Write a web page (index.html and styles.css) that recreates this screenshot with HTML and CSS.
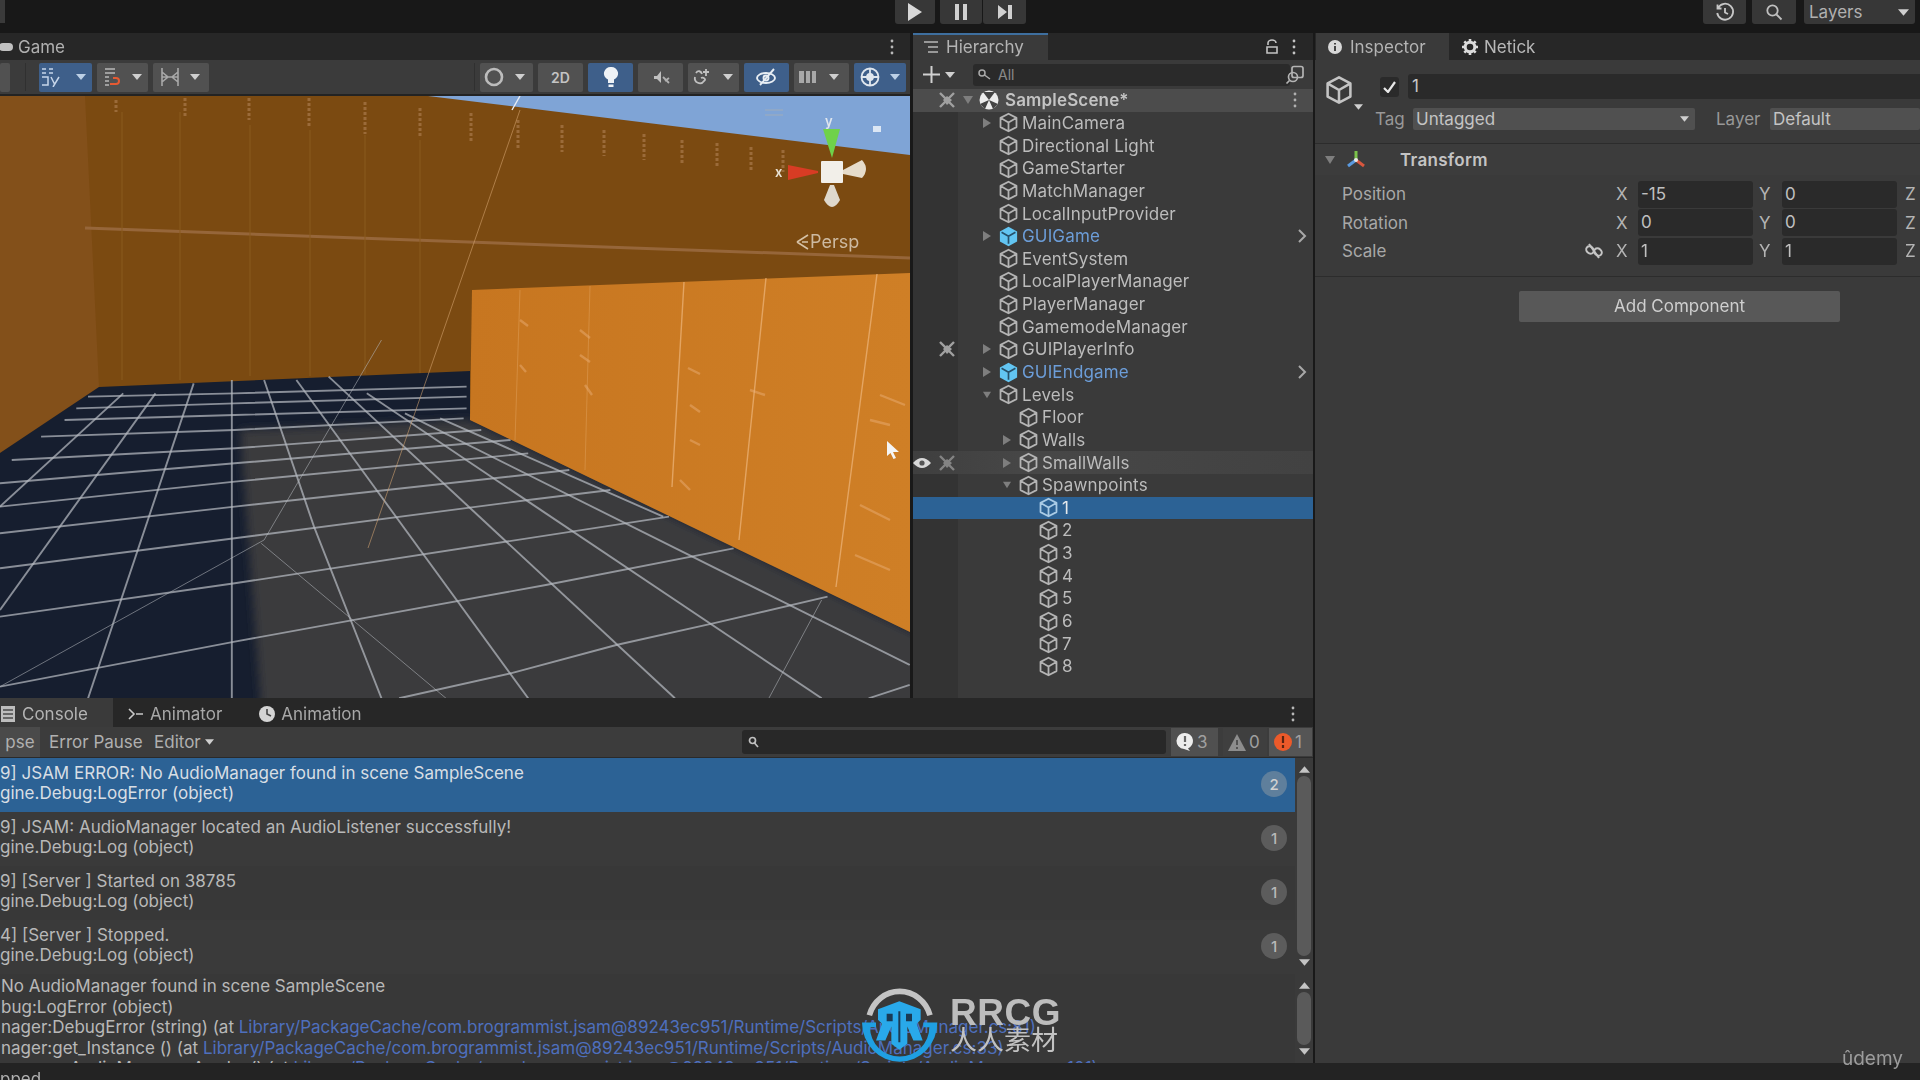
FILE: index.html
```html
<!DOCTYPE html>
<html lang="en">
<head>
<meta charset="utf-8">
<title>Unity Editor</title>
<link rel="stylesheet" href="styles.css">
</head>
<body>
<svg class="defs" width="0" height="0" aria-hidden="true">
  <symbol id="cube" viewBox="0 0 20 20"><path d="M10 1.6 17.6 5.6V14.4L10 18.4 2.4 14.4V5.6ZM2.6 5.8 10 10 17.4 5.8M10 10V18" fill="none" stroke="currentColor" stroke-width="1.7" stroke-linejoin="round"/></symbol>
  <symbol id="prefab" viewBox="0 0 20 20"><path d="M10 .8 18.2 5.2V14.8L10 19.2 1.8 14.8V5.2Z" fill="#62c5f2"/><path d="M3.4 6 10 9.8 16.6 6M10 9.8V17" fill="none" stroke="#26506a" stroke-width="1.6"/></symbol>
  <symbol id="hidden" viewBox="0 0 20 20"><path d="M3 3 17 17M17 3 3 17" stroke="#a0a0a0" stroke-width="2.4"/><path d="M6 10 10 6 15 10 10 15Z" fill="#a0a0a0"/></symbol>
  <symbol id="caret" viewBox="0 0 10 6"><path d="M0 0H10L5 6Z" fill="currentColor"/></symbol>
  <symbol id="right" viewBox="0 0 8 10"><path d="M0 0 8 5 0 10Z" fill="currentColor"/></symbol>
  <symbol id="down" viewBox="0 0 10 8"><path d="M0 0H10L5 8Z" fill="currentColor"/></symbol>
  <symbol id="dots" viewBox="0 0 4 16"><circle cx="2" cy="2" r="1.4" fill="currentColor"/><circle cx="2" cy="8" r="1.4" fill="currentColor"/><circle cx="2" cy="14" r="1.4" fill="currentColor"/></symbol>
</svg>

<div class="app">
  <header class="topbar">
    <div class="stub"></div>
    <div class="play-group">
      <div class="top-btn w40"><svg width="16" height="18" viewBox="0 0 16 18"><path d="M1 0 15 9 1 18Z" fill="#d8d8d8"/></svg></div>
      <div class="top-btn w42"><svg width="14" height="16" viewBox="0 0 14 16"><path d="M1 0H5V16H1ZM9 0H13V16H9Z" fill="#d0d0d0"/></svg></div>
      <div class="top-btn w43"><svg width="16" height="16" viewBox="0 0 16 16"><path d="M1 1 10 8 1 15ZM11 1H15V15H11Z" fill="#d0d0d0"/></svg></div>
    </div>
    <div class="top-right">
      <div class="top-btn w43"><svg width="20" height="20" viewBox="0 0 20 20" fill="none" stroke="#c8c8c8" stroke-width="1.8"><path d="M3 6A8 8 0 1 1 2.2 11M2.5 2.5V6.5H6.5M10 6V10.5L13 12"/></svg></div>
      <div class="top-btn w44"><svg width="18" height="18" viewBox="0 0 18 18" fill="none" stroke="#c0c0c0" stroke-width="1.8"><circle cx="7.5" cy="7.5" r="5.2"/><path d="M11.5 11.5 16.5 16.5"/></svg></div>
      <div class="top-btn layers"><span>Layers</span><svg class="ic-caret" width="11" height="7"><use href="#caret"/></svg></div>
    </div>
  </header>

  <div class="workspace">
    <div class="left-col">
      <div class="upper-row">
        <section class="game">
          <div class="strip">
            <div class="game-tab"><svg width="14" height="10" viewBox="0 0 14 10"><rect x="0" y="1" width="14" height="8" rx="4" fill="#c0c0c0"/></svg><span>Game</span></div>
            <svg class="menu-dots" width="4" height="16"><use href="#dots"/></svg>
          </div>
          <div class="toolbar">
            <div class="tools">
              <div class="tool stub-tool"></div>
              <div class="sep sep-a"></div>
              <div class="tool on w53 split tight"><svg width="22" height="20" viewBox="0 0 22 20" fill="none" stroke="#c6d6ea" stroke-width="1.5"><path d="M2 2H6M9 2H13M2 6H6M9 6H13M2 10H8V18H2M11 10 15 18M19 10 13 20"/></svg><svg class="ic-caret" width="10" height="6"><use href="#caret"/></svg></div>
              <div class="tool w51 split"><svg width="20" height="20" viewBox="0 0 20 20" fill="none" stroke="#b8b8b8" stroke-width="1.4"><path d="M4 2H14M4 6H14M4 10H8M4 14H8M4 18H8"/><path d="M9 17H15A3 3 0 0 0 15 11H12" stroke="#e65a32" stroke-width="2"/></svg><svg class="ic-caret" width="10" height="6"><use href="#caret"/></svg></div>
              <div class="tool w56 split wide"><svg width="22" height="20" viewBox="0 0 22 20" fill="none" stroke="#a8a8a8" stroke-width="1.6"><path d="M3 1V19M19 1V19M3 5 9 10 3 15M19 5 13 10 19 15M3 10H19"/></svg><svg class="ic-caret" width="10" height="6"><use href="#caret"/></svg></div>
            </div>
            <div class="tools right-tools">
              <div class="sep"></div>
              <div class="tool w53 split"><svg width="20" height="20" viewBox="0 0 20 20" fill="none" stroke="#bcbcbc" stroke-width="2.6"><circle cx="10" cy="10" r="8"/></svg><svg class="ic-caret" width="10" height="6"><use href="#caret"/></svg></div>
              <div class="tool w45 two-d">2D</div>
              <div class="tool on w45"><svg width="16" height="22" viewBox="0 0 16 22"><path d="M8 1A6.5 6.5 0 0 1 11 13.5V17H5V13.5A6.5 6.5 0 0 1 8 1ZM5.5 18.5H10.5V21H5.5Z" fill="#eef2f6"/></svg></div>
              <div class="tool w45"><svg width="20" height="20" viewBox="0 0 20 20"><path d="M3 9H6L10 4V16L6 12H3Z" fill="#c0c0c0"/><path d="M12 10 18 16M14 14 18 11" stroke="#b0b0b0" stroke-width="1.8"/></svg></div>
              <div class="tool w51 split"><svg width="20" height="20" viewBox="0 0 20 20" fill="none" stroke="#c0c0c0" stroke-width="1.8"><path d="M3 10A5 5 0 0 0 12 14C15 12 11 10 9 11M4 6C6 3 9 4 10 7M14 2V9M11 5H17"/></svg><svg class="ic-caret" width="10" height="6"><use href="#caret"/></svg></div>
              <div class="tool on w45"><svg width="24" height="20" viewBox="0 0 24 20" fill="none" stroke="#e8eef4" stroke-width="1.9"><ellipse cx="11" cy="11" rx="9" ry="5"/><circle cx="11" cy="11" r="2.5"/><path d="M5 18 19 2"/></svg></div>
              <div class="tool w55 split"><svg width="20" height="16" viewBox="0 0 20 16"><path d="M1 2H6V14H1ZM8 2H12V14H8ZM14 2H18V14H14Z" fill="#a8a8a8"/></svg><svg class="ic-caret" width="10" height="6"><use href="#caret"/></svg></div>
              <div class="tool on w52 split gz"><svg width="22" height="22" viewBox="0 0 22 22" fill="none" stroke="#dfe6ee" stroke-width="1.8"><circle cx="11" cy="11" r="8.5"/><path d="M3 11H19M11 3V19" /><circle cx="11" cy="11" r="3" fill="#dfe6ee"/></svg><svg class="ic-caret" width="10" height="6"><use href="#caret"/></svg></div>
            </div>
          </div>
          <div class="scene">
            <svg class="scene-art" viewBox="0 96 910 602" preserveAspectRatio="none">
              <defs>
                <filter id="soft" x="-5%" y="-5%" width="110%" height="110%"><feGaussianBlur stdDeviation="4"/></filter>
                <linearGradient id="wallR" x1="0" y1="0" x2="1" y2="0"><stop offset="0" stop-color="#c77620"/><stop offset="1" stop-color="#cf7f26"/></linearGradient>
              </defs>
              <rect x="0" y="96" width="910" height="602" fill="#7b4a11"/>
              <path d="M428 96H910V155Z" fill="#7fa4d6"/>
              <path d="M0 96H85L99 387 0 453Z" fill="#83501a"/>
              <path d="M85 228 910 258" stroke="#96663a" stroke-width="3"/>
              <path d="M116 100V112M185 98V116M249 98V120M309 98V127M365 102V134M420 108V138M471 113V143M518 120V148M562 125V152M604 130V156M644 134V160M682 140V163M717 143V167M751 147V170M783 150V172" stroke="#c89a72" stroke-width="3" stroke-dasharray="3 2" opacity=".42"/>
              <path d="M122 112V380M180 112V380M250 125V376M310 130V376M365 135V374M420 140V374" stroke="#8a5a1e" stroke-width="1"/>
              <path d="M0 453 99 387 470 371V420L910 632V698H0Z" fill="#161e2f"/>
              <g filter="url(#soft)"><path d="M240 430 470 420 930 640V720H262Z" fill="#3b3b3e"/></g>
              <g transform="translate(0 340) scale(.5869 .3333)" fill="none" stroke="#b6bac0" stroke-opacity=".72">
                <g stroke-width="1.9">
                  <path vector-effect="non-scaling-stroke" d="M0 830 400 730 1140 530"/>
                  <path vector-effect="non-scaling-stroke" d="M0 1040 400 905 930 735 1250 625"/>
                  <path vector-effect="non-scaling-stroke" d="M680 1075 870 1000 1050 915 1215 850 1410 770"/>
                  <path vector-effect="non-scaling-stroke" d="M1480 1075 1550 1035"/>
                  <path vector-effect="non-scaling-stroke" d="M0 685 400 595 900 480 1040 450"/>
                  <path vector-effect="non-scaling-stroke" d="M0 580 400 500 970 390"/>
                  <path vector-effect="non-scaling-stroke" d="M0 500 400 425 900 340"/>
                  <path vector-effect="non-scaling-stroke" d="M0 430 400 370 870 300"/>
                  <path vector-effect="non-scaling-stroke" d="M20 360 400 325 820 270"/>
                  <path vector-effect="non-scaling-stroke" d="M70 290 400 270 790 235"/>
                  <path vector-effect="non-scaling-stroke" d="M110 240 400 225 795 205"/>
                  <path vector-effect="non-scaling-stroke" d="M130 205 400 190 795 170"/>
                  <path vector-effect="non-scaling-stroke" d="M150 170 400 160 795 140"/>
                  <path vector-effect="non-scaling-stroke" d="M395 120V1075"/>
                  <path vector-effect="non-scaling-stroke" d="M450 120 535 560 650 1075"/>
                  <path vector-effect="non-scaling-stroke" d="M505 120 900 1075"/>
                  <path vector-effect="non-scaling-stroke" d="M560 110 1150 1075"/>
                  <path vector-effect="non-scaling-stroke" d="M625 160 1400 1075"/>
                  <path vector-effect="non-scaling-stroke" d="M690 220 1550 975"/>
                  <path vector-effect="non-scaling-stroke" d="M750 235 1130 530"/>
                  <path vector-effect="non-scaling-stroke" d="M330 130 150 1075"/>
                  <path vector-effect="non-scaling-stroke" d="M265 160 0 810"/>
                  <path vector-effect="non-scaling-stroke" d="M210 160 0 500"/>
                </g>
                <g stroke-width="1" stroke-opacity=".55">
                  <path vector-effect="non-scaling-stroke" d="M650 0 450 600 0 1040"/>
                  <path vector-effect="non-scaling-stroke" d="M445 610 760 1075"/>
                  <path vector-effect="non-scaling-stroke" d="M1400 780 1310 1075"/>
                </g>
              </g>
              <path d="M472 290 910 273V632L470 420Z" fill="url(#wallR)"/>
              <path d="M684 282 672 487M766 278 739 540M877 274 836 587" stroke="#eeb67c" stroke-width="1.4" opacity=".7"/>
              <path d="M520 290 515 440M590 286 585 470" stroke="#dc9a52" stroke-width="1" opacity=".6"/>
              <path d="M688 368 700 374M690 405 700 412M680 480 690 490M700 445 690 440M880 395 905 405M870 420 890 425M860 505 890 520M855 555 890 570M580 330 590 338M580 355 590 362M585 385 592 395M750 390 765 395M520 320 528 326M520 365 526 372" stroke="#ecb27c" stroke-width="2.4" opacity=".45"/>
              <path d="M520 96 512 110" stroke="#e8ecf4" stroke-width="1.4"/>
              <path d="M520 110 368 548" stroke="#d9a874" stroke-width="1" opacity=".55"/>
              <path d="M765 110H783M765 115H783" stroke="#8fa8c8" stroke-width="2"/>
              <rect x="873" y="126" width="8" height="6" fill="#dbe6f4"/>
              <path d="M788 165 818 171V173L788 180Z" fill="#d83c24"/>
              <path d="M823 129H840L832 158Z" fill="#6fd24a"/>
              <path d="M843 170 862 160Q870 169 862 178L843 174Z" fill="#e6dccb"/>
              <path d="M830 185H834L840 200Q832 214 824 200Z" fill="#dfd8cc"/>
              <rect x="821" y="161" width="22" height="22" rx="1" fill="#f2efe9"/>
              <path d="M797 242 808 235M797 242 808 249M802 242H808" stroke="#d6c2a6" stroke-width="1.6" fill="none"/>
            </svg>
            <span class="axis axis-y">y</span>
            <span class="axis axis-x">x</span>
            <span class="persp">Persp</span>
            <svg class="cursor" width="14" height="18" viewBox="0 0 14 18"><path d="M1 0 13 11H7L10 17 7.5 18 4.5 12 1 15Z" fill="#f4f4f4"/></svg>
          </div>
        </section>

        <section class="hierarchy">
          <div class="strip">
            <div class="tab hier-tab"><svg width="14" height="12" viewBox="0 0 14 12" fill="none" stroke="#b8b8b8" stroke-width="1.5"><path d="M0 1H14M4 6H14M4 11H14"/></svg><span>Hierarchy</span></div>
            <div class="strip-tools"><svg width="12" height="15" viewBox="0 0 12 15" fill="none" stroke="#c4c4c4" stroke-width="1.6"><path d="M2 6V4A4 3 0 0 1 10 4M1 8H11V14H1Z"/></svg><svg width="4" height="16"><use href="#dots"/></svg></div>
          </div>
          <div class="hier-tools">
            <svg class="plus" width="17" height="17" viewBox="0 0 17 17"><path d="M8.5 0V17M0 8.5H17" stroke="#d0d0d0" stroke-width="2"/></svg>
            <svg class="ic-caret" width="10" height="6"><use href="#caret"/></svg>
            <div class="search-field"><svg width="14" height="12" viewBox="0 0 14 12" fill="none" stroke="#aaa" stroke-width="1.5"><circle cx="4" cy="4" r="3"/><path d="M6.5 6 12 10"/></svg><span>All</span></div>
            <svg class="scene-vis" width="20" height="20" viewBox="0 0 20 20" fill="none" stroke="#b4b4b4" stroke-width="1.7"><rect x="7" y="1.5" width="11" height="11" rx="2"/><circle cx="8" cy="12" r="4.5"/><path d="M4.5 15.5 1.5 18.5"/></svg>
          </div>
          <div class="tree">
            <div class="row scene-row"><div class="gut"><svg width="22" height="20"><use href="#hidden"/></svg></div><div class="pad scene-pad"><svg class="arrow" width="10" height="8"><use href="#down"/></svg><svg class="unity" width="20" height="20" viewBox="0 0 20 20"><circle cx="10" cy="10" r="9.5" fill="#ececec"/><path d="M10 10 4 2H16ZM10 10 1 14 6 19ZM10 10 19 14 14 19Z" fill="#444"/></svg><span class="name strong">SampleScene*</span></div><svg class="row-dots" width="4" height="16"><use href="#dots"/></svg></div>
            <div class="row"><div class="gut"></div><div class="pad d1"><svg class="arrow" width="8" height="10"><use href="#right"/></svg><svg class="c" width="21" height="21"><use href="#cube"/></svg><span class="name">MainCamera</span></div></div>
            <div class="row"><div class="gut"></div><div class="pad d1"><i class="noarrow"></i><svg class="c" width="21" height="21"><use href="#cube"/></svg><span class="name">Directional Light</span></div></div>
            <div class="row"><div class="gut"></div><div class="pad d1"><i class="noarrow"></i><svg class="c" width="21" height="21"><use href="#cube"/></svg><span class="name">GameStarter</span></div></div>
            <div class="row"><div class="gut"></div><div class="pad d1"><i class="noarrow"></i><svg class="c" width="21" height="21"><use href="#cube"/></svg><span class="name">MatchManager</span></div></div>
            <div class="row"><div class="gut"></div><div class="pad d1"><i class="noarrow"></i><svg class="c" width="21" height="21"><use href="#cube"/></svg><span class="name">LocalInputProvider</span></div></div>
            <div class="row"><div class="gut"></div><div class="pad d1"><svg class="arrow" width="8" height="10"><use href="#right"/></svg><svg class="c" width="21" height="21"><use href="#prefab"/></svg><span class="name blue">GUIGame</span></div><svg class="chev" width="9" height="14" viewBox="0 0 9 14" fill="none" stroke="#a8a8a8" stroke-width="2"><path d="M1 1 7 7 1 13"/></svg></div>
            <div class="row"><div class="gut"></div><div class="pad d1"><i class="noarrow"></i><svg class="c" width="21" height="21"><use href="#cube"/></svg><span class="name">EventSystem</span></div></div>
            <div class="row"><div class="gut"></div><div class="pad d1"><i class="noarrow"></i><svg class="c" width="21" height="21"><use href="#cube"/></svg><span class="name">LocalPlayerManager</span></div></div>
            <div class="row"><div class="gut"></div><div class="pad d1"><i class="noarrow"></i><svg class="c" width="21" height="21"><use href="#cube"/></svg><span class="name">PlayerManager</span></div></div>
            <div class="row"><div class="gut"></div><div class="pad d1"><i class="noarrow"></i><svg class="c" width="21" height="21"><use href="#cube"/></svg><span class="name">GamemodeManager</span></div></div>
            <div class="row"><div class="gut"><svg width="22" height="20"><use href="#hidden"/></svg></div><div class="pad d1"><svg class="arrow" width="8" height="10"><use href="#right"/></svg><svg class="c" width="21" height="21"><use href="#cube"/></svg><span class="name">GUIPlayerInfo</span></div></div>
            <div class="row"><div class="gut"></div><div class="pad d1"><svg class="arrow" width="8" height="10"><use href="#right"/></svg><svg class="c" width="21" height="21"><use href="#prefab"/></svg><span class="name blue">GUIEndgame</span></div><svg class="chev" width="9" height="14" viewBox="0 0 9 14" fill="none" stroke="#a8a8a8" stroke-width="2"><path d="M1 1 7 7 1 13"/></svg></div>
            <div class="row"><div class="gut"></div><div class="pad d1"><svg class="arrow" width="10" height="8"><use href="#down"/></svg><svg class="c" width="21" height="21"><use href="#cube"/></svg><span class="name">Levels</span></div></div>
            <div class="row"><div class="gut"></div><div class="pad d2"><i class="noarrow"></i><svg class="c" width="21" height="21"><use href="#cube"/></svg><span class="name">Floor</span></div></div>
            <div class="row"><div class="gut"></div><div class="pad d2"><svg class="arrow" width="8" height="10"><use href="#right"/></svg><svg class="c" width="21" height="21"><use href="#cube"/></svg><span class="name">Walls</span></div></div>
            <div class="row hover"><div class="gut"><svg class="eye" width="18" height="12" viewBox="0 0 18 12"><path d="M0 6Q9 -4 18 6 9 16 0 6Z" fill="#d8d8d8"/><circle cx="9" cy="6" r="2.6" fill="#555"/></svg><svg class="dim" width="22" height="20"><use href="#hidden"/></svg></div><div class="pad d2"><svg class="arrow" width="8" height="10"><use href="#right"/></svg><svg class="c" width="21" height="21"><use href="#cube"/></svg><span class="name">SmallWalls</span></div></div>
            <div class="row"><div class="gut"></div><div class="pad d2"><svg class="arrow" width="10" height="8"><use href="#down"/></svg><svg class="c" width="21" height="21"><use href="#cube"/></svg><span class="name">Spawnpoints</span></div></div>
            <div class="row selected"><div class="gut"></div><div class="pad d3"><i class="noarrow"></i><svg class="c" width="21" height="21"><use href="#cube"/></svg><span class="name">1</span></div></div>
            <div class="row"><div class="gut"></div><div class="pad d3"><i class="noarrow"></i><svg class="c" width="21" height="21"><use href="#cube"/></svg><span class="name">2</span></div></div>
            <div class="row"><div class="gut"></div><div class="pad d3"><i class="noarrow"></i><svg class="c" width="21" height="21"><use href="#cube"/></svg><span class="name">3</span></div></div>
            <div class="row"><div class="gut"></div><div class="pad d3"><i class="noarrow"></i><svg class="c" width="21" height="21"><use href="#cube"/></svg><span class="name">4</span></div></div>
            <div class="row"><div class="gut"></div><div class="pad d3"><i class="noarrow"></i><svg class="c" width="21" height="21"><use href="#cube"/></svg><span class="name">5</span></div></div>
            <div class="row"><div class="gut"></div><div class="pad d3"><i class="noarrow"></i><svg class="c" width="21" height="21"><use href="#cube"/></svg><span class="name">6</span></div></div>
            <div class="row"><div class="gut"></div><div class="pad d3"><i class="noarrow"></i><svg class="c" width="21" height="21"><use href="#cube"/></svg><span class="name">7</span></div></div>
            <div class="row"><div class="gut"></div><div class="pad d3"><i class="noarrow"></i><svg class="c" width="21" height="21"><use href="#cube"/></svg><span class="name">8</span></div></div>
          </div>
        </section>
      </div>

      <section class="console">
        <div class="strip console-strip">
          <div class="tab con-tab"><svg width="14" height="16" viewBox="0 0 14 16"><path d="M0 0H14V16H0Z" fill="#bdbdbd"/><path d="M2 4H12M2 8H12M2 12H12" stroke="#4a4a4a" stroke-width="1.5"/></svg><span>Console</span></div>
          <div class="plain-tab anim-a"><svg width="16" height="12" viewBox="0 0 16 12" fill="none" stroke="#c8c8c8" stroke-width="1.6"><path d="M1 1 6 6 1 11M8 6H15"/></svg><span>Animator</span></div>
          <div class="plain-tab anim-b"><svg width="16" height="16" viewBox="0 0 16 16"><circle cx="8" cy="8" r="8" fill="#d4d4d4"/><path d="M8 3V8L12 10" stroke="#444" stroke-width="1.6" fill="none"/></svg><span>Animation</span></div>
          <svg class="menu-dots con-dots" width="4" height="16"><use href="#dots"/></svg>
        </div>
        <div class="con-tools">
          <div class="con-btn active">pse</div>
          <div class="con-btn err-pause">Error Pause</div>
          <div class="con-btn editor">Editor<svg class="ic-caret" width="9" height="6"><use href="#caret"/></svg></div>
          <div class="con-search"><svg width="11" height="12" viewBox="0 0 11 12" fill="none" stroke="#c0c0c0" stroke-width="1.7"><circle cx="4.5" cy="4.5" r="3"/><path d="M6.5 7 10 11"/></svg></div>
          <div class="counter c-info"><svg width="18" height="20" viewBox="0 0 18 20"><path d="M9 1A8 8 0 0 1 12 16.4L14 19 8 17A8 8 0 0 1 9 1Z" fill="#ededed"/><path d="M9 4V10M9 12V14" stroke="#666" stroke-width="2.2"/></svg><span>3</span></div>
          <div class="counter c-warn"><svg width="18" height="17" viewBox="0 0 18 17"><path d="M9 0 18 17H0Z" fill="#8d8d8d"/><path d="M9 6V11M9 13V15" stroke="#444" stroke-width="1.6"/></svg><span>0</span></div>
          <div class="counter c-err"><svg width="18" height="20" viewBox="0 0 18 20"><circle cx="9" cy="10" r="9" fill="#ec5a2a"/><path d="M9 4V11M9 13V16" stroke="#5a2410" stroke-width="2.2"/></svg><span>1</span></div>
        </div>
        <div class="pane list-pane">
          <div class="entries">
            <div class="entry sel"><div class="lines"><p>9] JSAM ERROR: No AudioManager found in scene SampleScene</p><p>gine.Debug:LogError (object)</p></div><b class="badge">2</b></div>
            <div class="entry"><div class="lines"><p>9] JSAM: AudioManager located an AudioListener successfully!</p><p>gine.Debug:Log (object)</p></div><b class="badge">1</b></div>
            <div class="entry alt"><div class="lines"><p>9] [Server ] Started on 38785</p><p>gine.Debug:Log (object)</p></div><b class="badge">1</b></div>
            <div class="entry"><div class="lines"><p>4] [Server ] Stopped.</p><p>gine.Debug:Log (object)</p></div><b class="badge">1</b></div>
          </div>
          <div class="scroll"><svg width="11" height="7"><use href="#caret" class="up"/></svg><div class="thumb"></div><svg width="11" height="7"><use href="#caret"/></svg></div>
        </div>
        <div class="pane detail-pane">
          <div class="detail">
            <p>No AudioManager found in scene SampleScene</p>
            <p>bug:LogError (object)</p>
            <p>nager:DebugError (string) (at <a>Library/PackageCache/com.brogrammist.jsam@89243ec951/Runtime/Scripts/AudioManager.cs:81)</a></p>
            <p>nager:get_Instance () (at <a>Library/PackageCache/com.brogrammist.jsam@89243ec951/Runtime/Scripts/AudioManager.cs:33)</a></p>
            <p class="last">AudioManager:Awake () (at <a>Library/PackageCache/com.brogrammist.jsam@89243ec951/Runtime/Scripts/AudioManager.cs:101)</a></p>
          </div>
          <div class="scroll"><svg width="11" height="7"><use href="#caret" class="up"/></svg><div class="thumb"></div><svg width="11" height="7"><use href="#caret"/></svg></div>
        </div>
      </section>
    </div>

    <aside class="inspector">
      <div class="strip insp-strip">
        <div class="tab insp-tab"><svg width="14" height="14" viewBox="0 0 14 14"><circle cx="7" cy="7" r="7" fill="#d8d8d8"/><path d="M7 3V4.5M7 6V11" stroke="#444" stroke-width="2"/></svg><span>Inspector</span></div>
        <div class="plain-tab netick"><svg width="16" height="16" viewBox="0 0 16 16"><circle cx="8" cy="8" r="4.8" fill="none" stroke="#dcdcdc" stroke-width="3"/><path d="M8 0V3M8 13V16M0 8H3M13 8H16M2.3 2.3 4.4 4.4M11.6 11.6 13.7 13.7M2.3 13.7 4.4 11.6M11.6 4.4 13.7 2.3" stroke="#dcdcdc" stroke-width="2.6"/></svg><span>Netick</span></div>
      </div>
      <div class="insp-head">
        <div class="big-cube"><svg width="30" height="32" viewBox="0 0 20 20" class="cube-big"><use href="#cube"/></svg><svg class="ic-caret cube-caret" width="9" height="6"><use href="#caret"/></svg></div>
        <div class="head-body">
          <div class="name-row">
            <div class="check"><svg width="13" height="12" viewBox="0 0 13 12" fill="none" stroke="#e8e8e8" stroke-width="2.2"><path d="M1 7 5 11 12 1"/></svg></div>
            <div class="name-field">1</div>
          </div>
          <div class="tag-row">
            <span class="tag-label">Tag</span>
            <div class="drop tag-drop"><span>Untagged</span><svg class="ic-caret" width="9" height="6"><use href="#caret"/></svg></div>
            <span class="layer-label">Layer</span>
            <div class="drop layer-drop"><span>Default</span></div>
          </div>
        </div>
      </div>
      <div class="comp-head">
        <svg class="arrow" width="10" height="8"><use href="#down"/></svg>
        <svg class="tf-ico" width="22" height="22" viewBox="0 0 22 22"><path d="M11 2V11" stroke="#7bc24a" stroke-width="3"/><path d="M11 11 3 17" stroke="#5a9ae0" stroke-width="3"/><path d="M11 11 19 17" stroke="#d8573e" stroke-width="3"/><circle cx="11" cy="11" r="2" fill="#e8e8e8"/></svg>
        <span class="comp-title">Transform</span>
      </div>
      <div class="tf-grid">
        <span class="tf-label">Position</span><i></i><span class="ax">X</span><div class="num">-15</div><span class="ax ay">Y</span><div class="num">0</div><span class="ax az">Z</span>
        <span class="tf-label">Rotation</span><i></i><span class="ax">X</span><div class="num">0</div><span class="ax ay">Y</span><div class="num">0</div><span class="ax az">Z</span>
        <span class="tf-label">Scale</span><svg class="link" width="20" height="16" viewBox="0 0 20 16" fill="none" stroke="#c4c4c4" stroke-width="2"><ellipse cx="6" cy="7" rx="4" ry="3.4" transform="rotate(40 6 7)"/><ellipse cx="14" cy="9" rx="4" ry="3.4" transform="rotate(40 14 9)"/><path d="M5 1 15 15"/></svg><span class="ax">X</span><div class="num">1</div><span class="ax ay">Y</span><div class="num">1</div><span class="ax az">Z</span>
      </div>
      <div class="add-wrap"><div class="add-btn">Add Component</div></div>
    </aside>
  </div>

  <footer class="status"><span>pped</span></footer>
</div>

<div class="udemy">ûdemy</div>
<div class="watermark">
  <svg width="80" height="77" viewBox="30 20 240 230">
    <path d="M58 104A95 100 0 0 1 240 104" fill="none" stroke="#c4c4c4" stroke-width="17"/>
    <path d="M36 126H78V140H60A89 88 0 0 0 238 140H220V126H262A113 118 0 0 1 36 126Z" fill="#1f9fe2"/>
    <path d="M148 62 212 86V118L200 130 218 180H190L172 138V190L148 208 124 190V138L106 180H78L96 130 84 118V86Z" fill="#29a9ea"/>
    <path d="M110 100H128V122H110ZM168 100H186V122H168ZM145 92H151V185H145Z" fill="#1a3a54"/>
  </svg>
  <div class="wm-text"><span class="wm-en">RRCG</span><span class="wm-cn">人人素材</span></div>
</div>
</body>
</html>
```
FILE: styles.css
```css
* { box-sizing: border-box; }
html, body { margin: 0; padding: 0; width: 1920px; height: 1080px; overflow: hidden; background: #191919; }
body { font-family: Inter, "Liberation Sans", sans-serif; font-size: 17px; color: #b8b8b8; position: relative; }
p { margin: 0; }
i { display: block; font-style: normal; }
.defs { position: absolute; }
.up { transform: rotate(180deg); transform-origin: 5.5px 3.5px; }
.app { width: 1920px; height: 1080px; display: flex; flex-direction: column; filter: blur(.7px); }

.topbar { height: 33px; flex: none; background: #181818; display: flex; align-items: flex-start; }
.stub { width: 5px; height: 23px; background: #3a3a3a; }
.play-group { margin-left: 890px; display: flex; gap: 1px; }
.play-group .top-btn + .top-btn { margin-left: 4px; }
.play-group .top-btn:last-child { margin-left: 0; }
.top-btn { height: 24px; background: #373737; display: flex; align-items: center; justify-content: center; border-radius: 0 0 3px 3px; }
.w40 { width: 40px; } .w42 { width: 42px; } .w43 { width: 43px; } .w44 { width: 44px; }
.top-right { margin-left: auto; margin-right: 5px; display: flex; gap: 6px; }
.top-right .top-btn:last-child { margin-left: 2px; }
.layers { width: 111px; justify-content: space-between; padding: 0 6px 0 5px; color: #b0b0b0; }
.ic-caret { color: #cfcfcf; flex: none; }

.workspace { flex: 1; display: flex; min-height: 0; }
.left-col { width: 1313px; flex: none; display: flex; flex-direction: column; }
.upper-row { height: 665px; flex: none; display: flex; }
.strip { height: 27px; flex: none; background: #272727; display: flex; align-items: center; position: relative; }
.tab { height: 27px; background: #3a3a3a; display: flex; align-items: center; gap: 8px; color: #b4b4b4; }
.menu-dots { color: #b8b8b8; margin-left: auto; }

.game { width: 910px; flex: none; display: flex; flex-direction: column; }
.game .strip { padding-right: 16px; }
.game-tab { display: flex; align-items: center; gap: 5px; color: #b0b0b0; margin-left: -1px; }
.toolbar { height: 36px; flex: none; background: #3b3b3b; border-bottom: 2px solid #232323; display: flex; align-items: center; justify-content: space-between; padding-right: 4px; }
.tools { display: flex; align-items: center; gap: 5px; }
.right-tools { gap: 5px; }
.sep { width: 1px; height: 28px; background: #303030; }
.sep-a { margin: 0 8px 0 10px; }
.tool { height: 29px; background: #515151; border-radius: 2px; display: flex; align-items: center; justify-content: space-around; padding: 0 3px; }
.tool.on { background: #3e5f8a; }
.tool.on .ic-caret { color: #bcd0e6; }
.split { justify-content: flex-start; padding: 0 0 0 4px; gap: 11px; }
.tight { padding-left: 1px; gap: 14px; }
.wide { padding-left: 6px; gap: 9px; }
.gz { padding-left: 5px; gap: 9px; }
.stub-tool { width: 10px; }
.w45 { width: 45px; } .w51 { width: 51px; } .w52 { width: 52px; } .w53 { width: 53px; } .w55 { width: 55px; } .w56 { width: 56px; }
.two-d { color: #c4c4c4; font-weight: 600; font-size: 14px; }

.scene { flex: 1; position: relative; overflow: hidden; background: #7b4a11; }
.scene-art { display: block; width: 100%; height: 100%; }
.axis { position: absolute; font-size: 13px; color: #e9e2d4; font-weight: 600; }
.axis-y { left: 825px; top: 17px; color: #dfe6ee; }
.axis-x { left: 775px; top: 68px; }
.persp { position: absolute; left: 810px; top: 135px; color: #cdbaa2; font-size: 18px; }
.cursor { position: absolute; left: 886px; top: 345px; }

.hierarchy { width: 400px; margin-left: 3px; flex: none; display: flex; flex-direction: column; background: #3a3a3a; }
.hier-tab { width: 135px; padding-left: 11px; box-shadow: inset 0 2px 0 #3e6f9f; }
.strip-tools { margin-left: auto; display: flex; align-items: center; gap: 14px; padding-right: 17px; color: #c4c4c4; }
.hier-tools { height: 29px; flex: none; display: flex; align-items: center; padding-left: 10px; background: #3a3a3a; }
.hier-tools .ic-caret { margin-left: 5px; }
.search-field { width: 317px; height: 22px; margin-left: 18px; background: #2a2a2a; border-radius: 3px; display: flex; align-items: center; gap: 6px; padding-left: 5px; font-size: 14px; color: #8a8a8a; }
.scene-vis { margin-left: -5px; }
.tree { flex: 1; background: linear-gradient(90deg, #333 45px, #3a3a3a 45px); }
.row { height: 22.65px; display: flex; align-items: center; position: relative; }
.gut { width: 45px; flex: none; display: flex; align-items: center; justify-content: flex-end; gap: 2px; height: 100%; padding-right: 0; }
.eye { margin-right: 3px; }
.dim { opacity: .7; }
.pad { display: flex; align-items: center; }
.d1 { padding-left: 23px; } .d2 { padding-left: 43px; } .d3 { padding-left: 63px; }
.arrow { color: #7e7e7e; flex: none; }
.pad .arrow { width: 8px; margin-right: 7px; margin-left: 2px; }
.noarrow { width: 17px; flex: none; }
.c { color: #b4b4b4; flex: none; margin-right: 3px; }
.name { white-space: nowrap; font-size: 17px; letter-spacing: .15px; color: #bcbcbc; }
.blue { color: #6c9dd8; }
.strong { font-weight: 600; color: #c4c4c4; }
.scene-row { background: #4c4c4c; }
.scene-pad { padding-left: 5px; }
.scene-pad .arrow { width: 10px; margin: 0 6px 0 0; }
.unity { margin-right: 6px; }
.row-dots { margin-left: auto; margin-right: 16px; color: #b0b0b0; }
.chev { margin-left: auto; margin-right: 6px; }
.hover { background: linear-gradient(90deg, #3f3f3f, #474747 30%, #424242); }
.selected { background: #2c6295; }
.selected .gut { background: #2c6295; }
.selected .c { color: #a9cbe6; }
.selected .name { color: #e4e8ec; }

.console { flex: 1; display: flex; flex-direction: column; background: #3a3a3a; min-height: 0; }
.console-strip { height: 29px; background: #272727; padding-top: 2px; }
.con-tab { width: 113px; height: 27px; padding-left: 1px; gap: 7px; box-shadow: 0 -2px 0 #3a3a3a; }
.plain-tab { display: flex; align-items: center; gap: 6px; color: #a8a8a8; }
.anim-a { margin-left: 15px; } .anim-b { margin-left: 37px; gap: 6px; }
.con-dots { margin-right: 18px; }
.con-tools { height: 31px; flex: none; background: #3c3c3c; display: flex; align-items: stretch; border-bottom: 1px solid #2a2a2a; }
.con-btn { display: flex; align-items: center; gap: 4px; color: #b0b0b0; }
.active { width: 40px; background: #4a4a4a; justify-content: center; }
.err-pause { margin-left: 9px; width: 94px; white-space: nowrap; }
.editor { margin-left: 11px; width: 65px; }
.con-search { width: 424px; height: 24px; margin: 3px 0 0 523px; background: #282828; border-radius: 3px; display: flex; align-items: center; padding-left: 6px; }
.counter { height: 28px; margin-top: 1px; display: flex; align-items: center; gap: 3px; padding-left: 5px; color: #a0a0a0; }
.c-info { width: 47px; margin-left: 5px; background: #505050; }
.c-warn { width: 44px; margin-left: 5px; background: #3f3f3f; }
.c-err { width: 43px; margin-left: 2px; background: #555; }
.pane { display: grid; grid-template-columns: 1fr 18px; }
.list-pane { height: 216px; flex: none; }
.detail-pane { flex: 1; min-height: 0; overflow: hidden; background: #383838; }
.entry { height: 54px; display: flex; align-items: center; justify-content: space-between; padding-right: 8px; }
.alt { background: #383838; }
.sel { background: #2c6295; color: #d8dee4; }
.lines { line-height: 20px; white-space: nowrap; margin-top: -5px; }
.badge { width: 26px; height: 26px; margin-top: -2px; border-radius: 50%; background: #5c5c5c; display: flex; align-items: center; justify-content: center; font-weight: 500; font-size: 15px; color: #b8b8b8; }
.sel .badge { background: #5f7f9c; color: #d0d0d0; }
.scroll { background: #3a3a3a; display: flex; flex-direction: column; align-items: center; justify-content: space-between; padding: 8px 0; color: #cfcfcf; }
.scroll svg { color: #c4c4c4; flex: none; }
.thumb { flex: 1; width: 14px; margin: 3px 0; background: #5a5a5a; border-radius: 7px; }
.detail { line-height: 20.5px; padding-top: 2px; white-space: nowrap; overflow: hidden; }
.detail p { padding-left: 1px; }
.detail a { color: #4e6fbd; }
.last { padding-left: 70px !important; }

.inspector { flex: 1; margin-left: 2px; display: flex; flex-direction: column; background: #3a3a3a; min-width: 0; }
.insp-strip { padding-left: 1px; }
.insp-tab { width: 133px; padding-left: 12px; gap: 8px; }
.netick { margin-left: 13px; gap: 6px; color: #b8b8b8; }
.insp-head { height: 84px; flex: none; display: grid; grid-template-columns: 60px 1fr; border-bottom: 1px solid #2c2c2c; }
.big-cube { position: relative; padding: 14px 0 0 9px; color: #c0c0c0; }
.cube-big { color: #c4c4c4; }
.cube-caret { position: absolute; left: 39px; top: 44px; }
.head-body { min-width: 0; }
.name-row { height: 25px; margin-top: 14px; display: flex; align-items: center; }
.check { width: 19px; height: 20px; margin-left: 5px; background: #2a2a2a; border-radius: 3px; display: flex; align-items: center; justify-content: center; }
.name-field { flex: 1; height: 25px; margin-left: 9px; background: #2a2a2a; padding-left: 4px; line-height: 25px; color: #c8c8c8; border-radius: 3px 0 0 3px; }
.tag-row { height: 22px; margin-top: 9px; display: flex; align-items: center; }
.tag-label { width: 38px; color: #989898; }
.layer-label { width: 54px; margin-left: 21px; color: #989898; }
.drop { height: 22px; background: #505050; border-radius: 2px; display: flex; align-items: center; justify-content: space-between; padding: 0 6px 0 3px; color: #c4c4c4; }
.tag-drop { width: 282px; }
.layer-drop { flex: 1; }
.comp-head { height: 31px; flex: none; display: flex; align-items: center; padding-left: 10px; background: #3c3c3c; }
.comp-head .arrow { width: 10px; }
.tf-ico { margin-left: 10px; }
.comp-title { margin-left: 33px; font-weight: 600; color: #c4c4c4; letter-spacing: .3px; }
.tf-grid { padding: 5px 0 10px 27px; display: grid; grid-template-columns: 242px 22px 32px 115px 29px 115px auto; grid-auto-rows: 28.5px; align-items: center; border-bottom: 1px solid #2c2c2c; }
.tf-label { color: #a8a8a8; }
.ax { color: #b4b4b4; padding-left: 10px; }
.ay { padding-left: 6px; }
.az { padding-left: 8px; }
.num { height: 27px; background: #2a2a2a; border-radius: 3px; line-height: 27px; padding-left: 3px; color: #c0c0c0; }
.add-wrap { padding: 14px 0 0 204px; }
.add-btn { width: 321px; height: 31px; background: #585858; border-radius: 2px; display: flex; align-items: center; justify-content: center; color: #cfcfcf; }

.status { height: 17px; flex: none; background: #232323; overflow: hidden; color: #b0b0b0; padding-top: 6px; line-height: 20px; }

.udemy { position: absolute; left: 1842px; top: 1047px; font-size: 19px; color: #9c9c9c; filter: blur(.6px); }
.watermark { position: absolute; left: 860px; top: 987px; display: flex; align-items: flex-start; }
.wm-text { display: flex; flex-direction: column; margin: 11px 0 0 10px; }
.wm-en { font-family: "Liberation Sans", sans-serif; font-weight: 700; font-size: 37px; line-height: 30px; color: #bdbdbd; letter-spacing: .5px; }
.wm-cn { font-family: "Noto Sans CJK SC", sans-serif; font-size: 27px; line-height: 27px; color: #c2c2c2; margin-top: -3px; white-space: nowrap; }
```
